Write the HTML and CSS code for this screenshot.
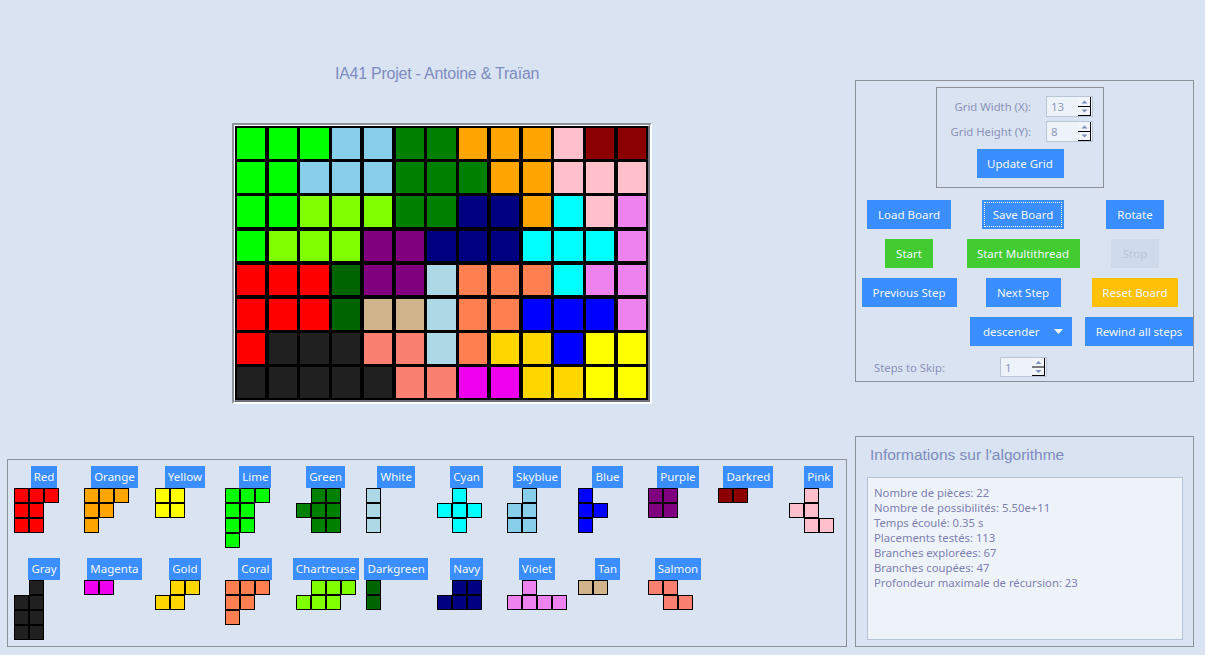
FILE: index.html
```html
<!DOCTYPE html>
<html lang="fr">
<head>
<meta charset="utf-8">
<title>IA41 Projet</title>
<link rel="stylesheet" href="styles.css">
</head>
<body>
<div class="app">
  <div class="left">
    <h1 class="title">IA41 Projet - Antoine &amp; Traïan</h1>
    <div class="board-frame">
      <div class="board">
        <i class="lime"></i><i class="lime"></i><i class="lime"></i><i class="skyblue"></i><i class="skyblue"></i><i class="green"></i><i class="green"></i><i class="orange"></i><i class="orange"></i><i class="orange"></i><i class="pink"></i><i class="darkred"></i><i class="darkred"></i>
        <i class="lime"></i><i class="lime"></i><i class="skyblue"></i><i class="skyblue"></i><i class="skyblue"></i><i class="green"></i><i class="green"></i><i class="green"></i><i class="orange"></i><i class="orange"></i><i class="pink"></i><i class="pink"></i><i class="pink"></i>
        <i class="lime"></i><i class="lime"></i><i class="chartreuse"></i><i class="chartreuse"></i><i class="chartreuse"></i><i class="green"></i><i class="green"></i><i class="navy"></i><i class="navy"></i><i class="orange"></i><i class="cyan"></i><i class="pink"></i><i class="violet"></i>
        <i class="lime"></i><i class="chartreuse"></i><i class="chartreuse"></i><i class="chartreuse"></i><i class="purple"></i><i class="purple"></i><i class="navy"></i><i class="navy"></i><i class="navy"></i><i class="cyan"></i><i class="cyan"></i><i class="cyan"></i><i class="violet"></i>
        <i class="red"></i><i class="red"></i><i class="red"></i><i class="darkgreen"></i><i class="purple"></i><i class="purple"></i><i class="white"></i><i class="coral"></i><i class="coral"></i><i class="coral"></i><i class="cyan"></i><i class="violet"></i><i class="violet"></i>
        <i class="red"></i><i class="red"></i><i class="red"></i><i class="darkgreen"></i><i class="tan"></i><i class="tan"></i><i class="white"></i><i class="coral"></i><i class="coral"></i><i class="blue"></i><i class="blue"></i><i class="blue"></i><i class="violet"></i>
        <i class="red"></i><i class="gray"></i><i class="gray"></i><i class="gray"></i><i class="salmon"></i><i class="salmon"></i><i class="white"></i><i class="coral"></i><i class="gold"></i><i class="gold"></i><i class="blue"></i><i class="yellow"></i><i class="yellow"></i>
        <i class="gray"></i><i class="gray"></i><i class="gray"></i><i class="gray"></i><i class="gray"></i><i class="salmon"></i><i class="salmon"></i><i class="magenta"></i><i class="magenta"></i><i class="gold"></i><i class="gold"></i><i class="yellow"></i><i class="yellow"></i>
      </div>
    </div>
    <div class="pieces">
      <div class="slot"><span class="tag">Red</span><div class="piece w3"><i class="red"></i><i class="red"></i><i class="red"></i><i class="red"></i><i class="red"></i><i class="e"></i><i class="red"></i><i class="red"></i><i class="e"></i></div></div>
      <div class="slot"><span class="tag">Orange</span><div class="piece w3"><i class="orange"></i><i class="orange"></i><i class="orange"></i><i class="orange"></i><i class="orange"></i><i class="e"></i><i class="orange"></i><i class="e"></i><i class="e"></i></div></div>
      <div class="slot"><span class="tag">Yellow</span><div class="piece w2"><i class="yellow"></i><i class="yellow"></i><i class="yellow"></i><i class="yellow"></i></div></div>
      <div class="slot"><span class="tag">Lime</span><div class="piece w3"><i class="lime"></i><i class="lime"></i><i class="lime"></i><i class="lime"></i><i class="lime"></i><i class="e"></i><i class="lime"></i><i class="lime"></i><i class="e"></i><i class="lime"></i><i class="e"></i><i class="e"></i></div></div>
      <div class="slot"><span class="tag">Green</span><div class="piece w3"><i class="e"></i><i class="green"></i><i class="green"></i><i class="green"></i><i class="green"></i><i class="green"></i><i class="e"></i><i class="green"></i><i class="green"></i></div></div>
      <div class="slot"><span class="tag">White</span><div class="piece w1"><i class="white"></i><i class="white"></i><i class="white"></i></div></div>
      <div class="slot"><span class="tag">Cyan</span><div class="piece w3"><i class="e"></i><i class="cyan"></i><i class="e"></i><i class="cyan"></i><i class="cyan"></i><i class="cyan"></i><i class="e"></i><i class="cyan"></i><i class="e"></i></div></div>
      <div class="slot"><span class="tag">Skyblue</span><div class="piece w2"><i class="e"></i><i class="skyblue"></i><i class="skyblue"></i><i class="skyblue"></i><i class="skyblue"></i><i class="skyblue"></i></div></div>
      <div class="slot"><span class="tag">Blue</span><div class="piece w2"><i class="blue"></i><i class="e"></i><i class="blue"></i><i class="blue"></i><i class="blue"></i><i class="e"></i></div></div>
      <div class="slot"><span class="tag">Purple</span><div class="piece w2"><i class="purple"></i><i class="purple"></i><i class="purple"></i><i class="purple"></i></div></div>
      <div class="slot"><span class="tag">Darkred</span><div class="piece w2"><i class="darkred"></i><i class="darkred"></i></div></div>
      <div class="slot"><span class="tag">Pink</span><div class="piece w3"><i class="e"></i><i class="pink"></i><i class="e"></i><i class="pink"></i><i class="pink"></i><i class="e"></i><i class="e"></i><i class="pink"></i><i class="pink"></i></div></div>

      <div class="slot"><span class="tag">Gray</span><div class="piece w2"><i class="e"></i><i class="gray"></i><i class="gray"></i><i class="gray"></i><i class="gray"></i><i class="gray"></i><i class="gray"></i><i class="gray"></i></div></div>
      <div class="slot"><span class="tag">Magenta</span><div class="piece w2"><i class="magenta"></i><i class="magenta"></i></div></div>
      <div class="slot"><span class="tag">Gold</span><div class="piece w3"><i class="e"></i><i class="gold"></i><i class="gold"></i><i class="gold"></i><i class="gold"></i><i class="e"></i></div></div>
      <div class="slot"><span class="tag">Coral</span><div class="piece w3"><i class="coral"></i><i class="coral"></i><i class="coral"></i><i class="coral"></i><i class="coral"></i><i class="e"></i><i class="coral"></i><i class="e"></i><i class="e"></i></div></div>
      <div class="slot"><span class="tag">Chartreuse</span><div class="piece w4"><i class="e"></i><i class="chartreuse"></i><i class="chartreuse"></i><i class="chartreuse"></i><i class="chartreuse"></i><i class="chartreuse"></i><i class="chartreuse"></i><i class="e"></i></div></div>
      <div class="slot"><span class="tag">Darkgreen</span><div class="piece w1"><i class="darkgreen"></i><i class="darkgreen"></i></div></div>
      <div class="slot"><span class="tag">Navy</span><div class="piece w3"><i class="e"></i><i class="navy"></i><i class="navy"></i><i class="navy"></i><i class="navy"></i><i class="navy"></i></div></div>
      <div class="slot"><span class="tag">Violet</span><div class="piece w4"><i class="e"></i><i class="violet"></i><i class="e"></i><i class="e"></i><i class="violet"></i><i class="violet"></i><i class="violet"></i><i class="violet"></i></div></div>
      <div class="slot"><span class="tag">Tan</span><div class="piece w2"><i class="tan"></i><i class="tan"></i></div></div>
      <div class="slot"><span class="tag">Salmon</span><div class="piece w3"><i class="salmon"></i><i class="salmon"></i><i class="e"></i><i class="e"></i><i class="salmon"></i><i class="salmon"></i></div></div>
    </div>
  </div>

  <div class="right">
    <div class="controls">
      <div class="group">
        <div class="fields">
          <span class="lbl">Grid Width (X):</span>
          <div class="spin"><span>13</span><svg class="spin-btn" width="13" height="19" viewBox="0 0 13 19"><rect x="0" y="0" width="13" height="19" fill="#F1F5FA"/><path d="M3.5 6.5 L6.5 3.5 L9.5 6.5 Z" fill="#7E8DB6"/><path d="M3.5 12.5 L6.5 15.5 L9.5 12.5 Z" fill="#7E8DB6"/><path d="M0 9.5 H13 M0 18.5 H13 M12.5 0 V19" stroke="#000" stroke-width="1"/></svg></div>
          <span class="lbl">Grid Height (Y):</span>
          <div class="spin"><span>8</span><svg class="spin-btn" width="13" height="19" viewBox="0 0 13 19"><rect x="0" y="0" width="13" height="19" fill="#F1F5FA"/><path d="M3.5 6.5 L6.5 3.5 L9.5 6.5 Z" fill="#7E8DB6"/><path d="M3.5 12.5 L6.5 15.5 L9.5 12.5 Z" fill="#7E8DB6"/><path d="M0 9.5 H13 M0 18.5 H13 M12.5 0 V19" stroke="#000" stroke-width="1"/></svg></div>
        </div>
        <button class="btn blue btn-update">Update Grid</button>
      </div>
      <div class="actions">
        <button class="btn blue b-load">Load Board</button>
        <button class="btn blue b-save focus">Save Board</button>
        <button class="btn blue b-rotate">Rotate</button>
        <button class="btn green b-start">Start</button>
        <button class="btn green b-multi">Start Multithread</button>
        <button class="btn disabled b-stop">Stop</button>
        <button class="btn blue b-prev">Previous Step</button>
        <button class="btn blue b-next">Next Step</button>
        <button class="btn amber b-reset">Reset Board</button>
        <span class="empty"></span>
        <div class="btn blue dropdown"><span>descender</span><svg width="9" height="5" viewBox="0 0 9 5"><path d="M0 0 H9 L4.5 5 Z" fill="#F4F7FF"/></svg></div>
        <button class="btn blue b-rewind">Rewind all steps</button>
      </div>
      <div class="steps">
        <span class="lbl steps-lbl">Steps to Skip:</span>
        <div class="spin spin-sm"><span>1</span><svg class="spin-btn" width="13" height="18" viewBox="0 0 13 18"><rect x="0" y="0" width="13" height="18" fill="#F1F5FA"/><path d="M3.5 6 L6.5 3 L9.5 6 Z" fill="#7E8DB6"/><path d="M3.5 12 L6.5 15 L9.5 12 Z" fill="#7E8DB6"/><path d="M0 9 H13 M0 17.5 H13 M12.5 0 V18" stroke="#000" stroke-width="1"/></svg></div>
      </div>
    </div>
    <div class="info">
      <h2 class="info-title">Informations sur l'algorithme</h2>
      <div class="info-box">
        <div>Nombre de pièces: 22</div>
        <div>Nombre de possibilités: 5.50e+11</div>
        <div>Temps écoulé: 0.35 s</div>
        <div>Placements testés: 113</div>
        <div>Branches explorées: 67</div>
        <div>Branches coupées: 47</div>
        <div>Profondeur maximale de récursion: 23</div>
      </div>
    </div>
  </div>
</div>
</body>
</html>
```

FILE: styles.css
```css
* { box-sizing: border-box; }

html, body {
  margin: 0;
  padding: 0;
}

body {
  width: 1205px;
  height: 655px;
  overflow: hidden;
  background: #D9E3F1;
  font-family: "Noto Sans", "DejaVu Sans", sans-serif;
  font-size: 11.3px;
}

.app {
  display: flex;
  gap: 8px;
  padding-left: 7px;
}

/* ---------- left column ---------- */
.left {
  width: 840px;
  padding-top: 64px;
}

.title {
  margin: 0 0 0 328px;
  font-family: "Liberation Sans", Arial, sans-serif;
  font-size: 16px;
  line-height: 20px;
  font-weight: normal;
  letter-spacing: -0.25px;
  color: #7F8CBF;
}

.board-frame {
  margin: 39px 0 0 225px;
  width: 420px;
  border: 2px solid;
  border-color: #8D949E #FFFFFF #FFFFFF #8D949E;
}

.board {
  height: 277px;
  border-style: solid;
  border-width: 1px 2px 2px 1px;
  border-color: #FFFFFF #6D727A #6D727A #FFFFFF;
  background: #000;
  padding: 2px;
  display: grid;
  grid-template-columns: repeat(13, 1fr);
  grid-template-rows: repeat(8, 1fr);
  gap: 3.7px 3.5px;
}

.board i { display: block; }

.pieces {
  margin-top: 55px;
  height: 188px;
  border: 1px solid #8B9099;
  padding: 6px 0 0 6px;
  display: grid;
  grid-template-columns: repeat(12, 60px);
  grid-auto-rows: 92px;
  column-gap: 10.45px;
}

.slot {
  display: flex;
  flex-direction: column;
  align-items: flex-start;
}

.tag {
  align-self: center;
  height: 22px;
  line-height: 22px;
  padding: 0 3px;
  background: #3A8EFF;
  color: #F4F7FF;
  font-size: 11.5px;
  white-space: nowrap;
}

.piece {
  display: grid;
  grid-auto-rows: 15px;
}
.w1 { grid-template-columns: 15px; }
.w2 { grid-template-columns: repeat(2, 15px); }
.w3 { grid-template-columns: repeat(3, 15px); }
.w4 { grid-template-columns: repeat(4, 15px); }

.piece i {
  display: block;
  width: 15px;
  height: 15px;
  border: 1px solid #000;
}
.piece i.e { border: 0; background: none; }

/* colours */
.red { background: #FF0000; }
.orange { background: #FFA500; }
.yellow { background: #FFFF00; }
.lime { background: #00FF00; }
.green { background: #008000; }
.white { background: #ADD8E6; }
.cyan { background: #00FFFF; }
.skyblue { background: #87CEEB; }
.blue { background: #0000FF; }
.purple { background: #800080; }
.darkred { background: #8B0000; }
.pink { background: #FFC0CB; }
.gray { background: #202020; }
.magenta { background: #EE00EE; }
.gold { background: #FFD700; }
.coral { background: #FF7F50; }
.chartreuse { background: #7FFF00; }
.darkgreen { background: #006400; }
.navy { background: #000080; }
.violet { background: #EE82EE; }
.tan { background: #D2B48C; }
.salmon { background: #FA8072; }

/* ---------- right column ---------- */
.right {
  width: 339px;
  padding-top: 80px;
}

.controls {
  height: 302px;
  border: 1px solid #8B9099;
  padding-top: 6px;
}

.group {
  margin-left: 80px;
  width: 168px;
  border: 1px solid #8C9199;
  padding: 8px 0 9px 0;
}

.fields {
  display: grid;
  grid-template-columns: auto 47px;
  grid-auto-rows: 21px;
  column-gap: 15px;
  row-gap: 4px;
  justify-content: end;
  align-items: center;
  margin-right: 10px;
}

.lbl {
  color: #8C92B8;
  text-align: right;
  white-space: nowrap;
}

.spin {
  height: 21px;
  display: flex;
  align-items: center;
  justify-content: space-between;
  background: #EEF3F9;
  border: 1px solid #B9C4D4;
  padding-left: 4px;
  color: #8F97BD;
  font-size: 11.5px;
}
.spin-btn { display: block; flex: none; margin-right: 1px; }
.spin-sm { height: 20px; width: 47px; }

.btn {
  height: 29px;
  border: 0;
  padding: 0;
  font-family: "Noto Sans", "DejaVu Sans", sans-serif;
  font-size: 11.5px;
  color: #F2F6FF;
  cursor: default;
  white-space: nowrap;
}
.btn.blue { background: #3A8EFF; }
.btn.green { background: #42CC31; }
.btn.amber { background: #FFC107; }
.btn.disabled { background: #CFDAEA; color: #B9C6DA; }
.btn.focus { outline: 1px dotted #FFFFFF; outline-offset: -3px; }

.btn-update {
  display: block;
  width: 87px;
  margin: 7px auto 0;
}

.actions {
  margin-top: 12px;
  display: grid;
  grid-template-columns: 106px 122px 102px;
  grid-auto-rows: 29px;
  row-gap: 10px;
  justify-items: center;
}

.b-load { width: 84px; }
.b-save { width: 82px; }
.b-rotate { width: 58px; }
.b-start { width: 48px; }
.b-multi { width: 113px; }
.b-stop { width: 48px; }
.b-prev { width: 95px; }
.b-next { width: 75px; }
.b-reset { width: 86px; }
.b-rewind { width: 108px; justify-self: start; margin-left: 1px; }

.dropdown {
  width: 102px;
  margin-right: 4px;
  display: flex;
  align-items: center;
  justify-content: space-between;
  padding: 0 9px 0 13px;
}

.steps {
  margin-top: 11px;
  display: flex;
  align-items: center;
  padding-left: 18px;
}
.steps-lbl { width: 126px; text-align: left; }

.info {
  margin-top: 54px;
  height: 211px;
  border: 1px solid #8B9099;
  padding: 8px 10px 0 11px;
}

.info-title {
  margin: 0 0 12px 3px;
  height: 20px;
  font-family: "Liberation Sans", Arial, sans-serif;
  font-size: 15.5px;
  line-height: 20px;
  font-weight: normal;
  color: #7F8BBF;
}

.info-box {
  width: 316px;
  height: 163px;
  background: #EEF3F9;
  border: 1px solid #B6C2D6;
  padding: 7px 6px;
  line-height: 15px;
  color: #7E80B0;
  font-size: 11.3px;
}
```
